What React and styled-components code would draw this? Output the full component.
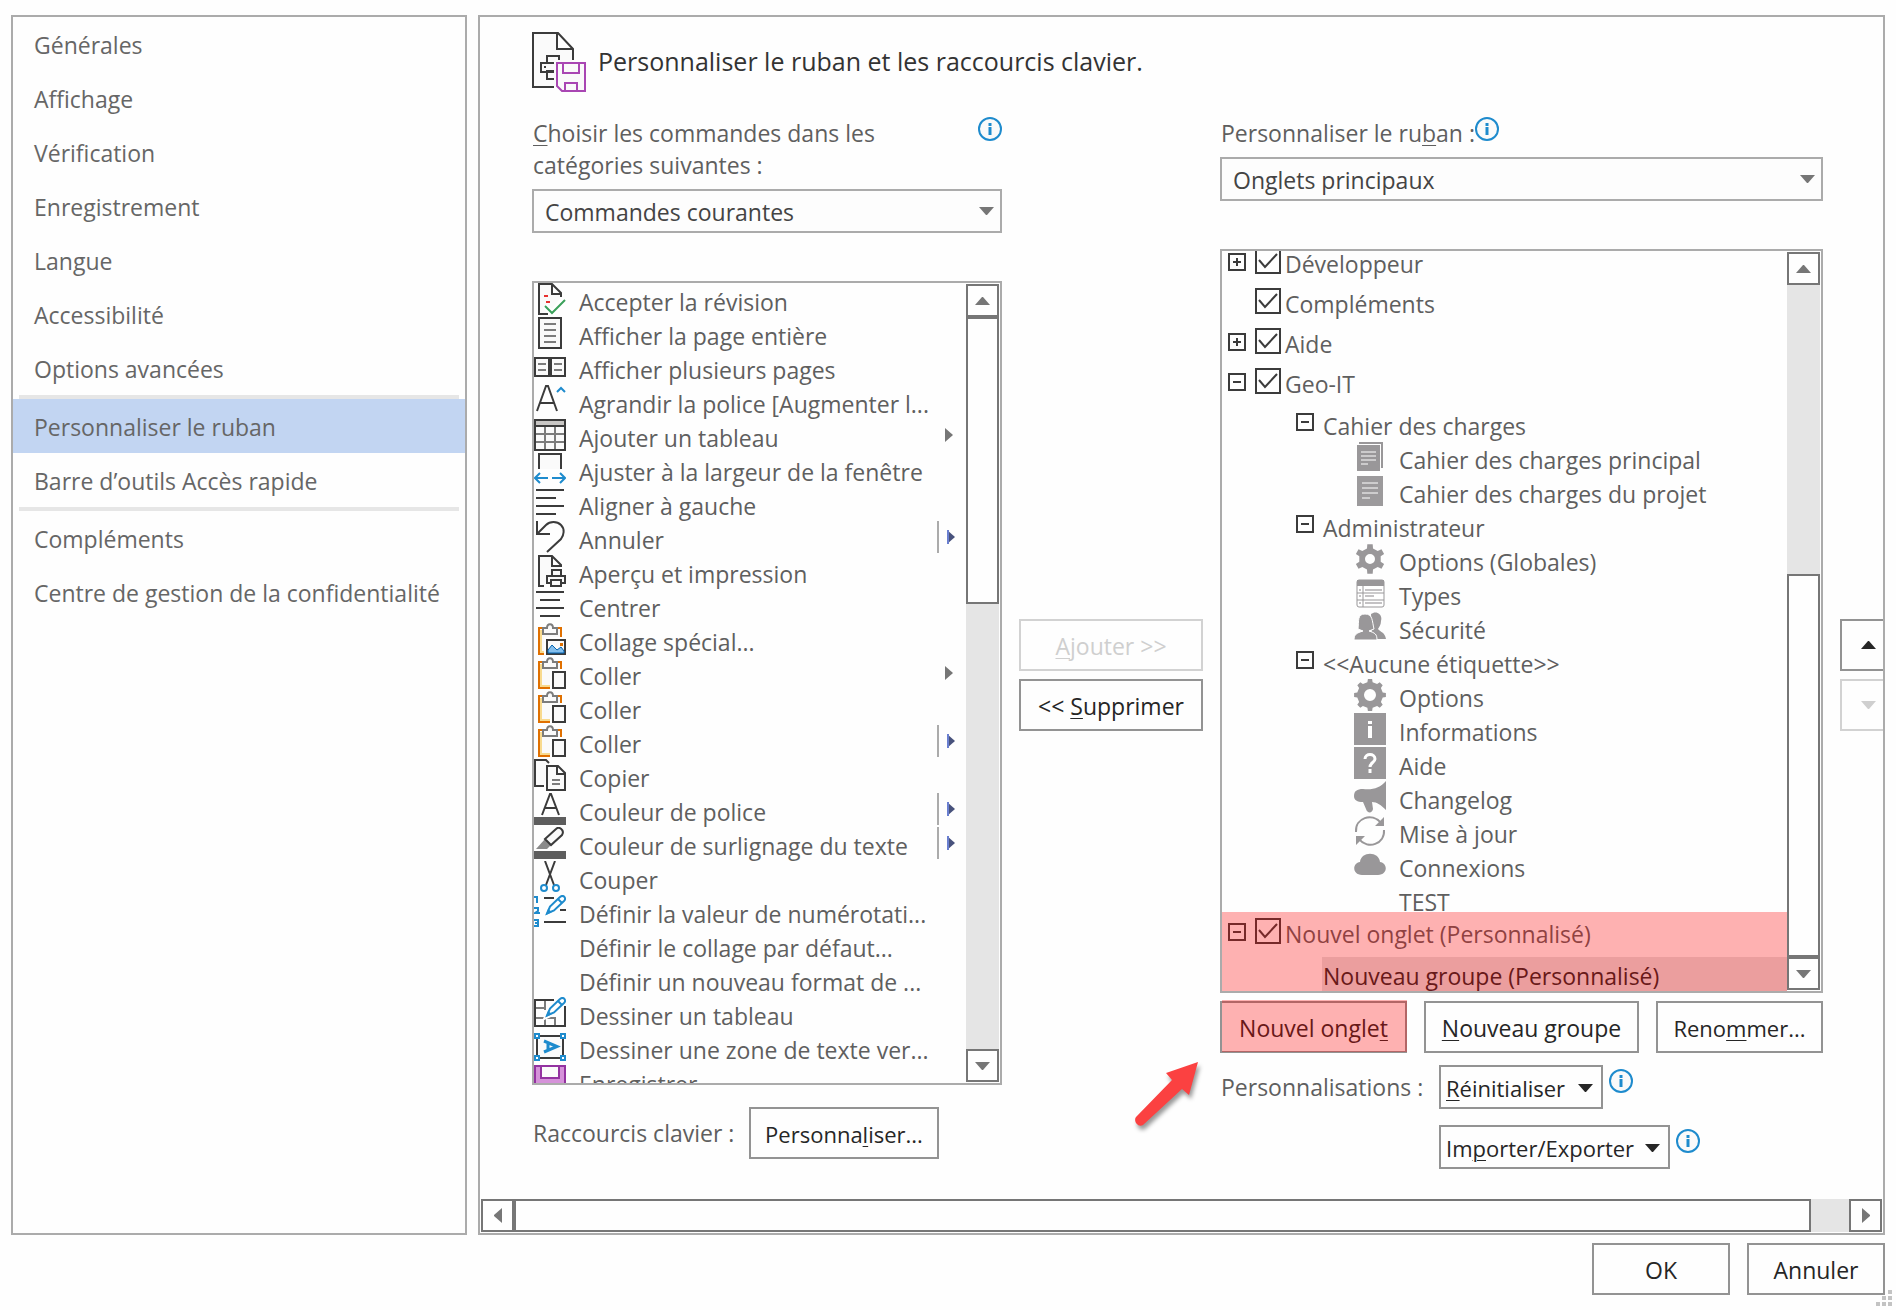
import React, { useState } from "react";
import styled, { createGlobalStyle } from "styled-components";

const INK = "#3b3b3b";
const BLUE = "#1e8bcd";
const GREY = "#999799";
const EDGE = "#767676";

const GlobalStyle = createGlobalStyle`
  *, *::before, *::after { box-sizing: border-box; }
  body {
    margin: 0;
    background: #fefefe;
    color: #5f5f5f;
    font: 23px/32px "Open Sans", "Noto Sans", sans-serif;
  }
  button, select, input { font: inherit; color: inherit; }
  u { text-decoration-thickness: 1px; text-underline-offset: 3px; }
`;

/* ---------- layout ---------- */

const Dialog = styled.div`
  position: relative;
  display: flex;
  flex-direction: column;
  gap: 8px;
  height: 100vh;
  padding: 15px 11px;
`;

const Columns = styled.div`
  display: flex;
  flex: 1;
  gap: 11px;
  min-height: 0;
`;

const Sidebar = styled.nav`
  flex: none;
  width: 456px;
  border: 2px solid #ababab;
`;

const NavLink = styled.a`
  display: block;
  height: 54px;
  padding: 0 0 0 21px;
  line-height: 56px;
  color: #666;
  text-decoration: none;
  white-space: nowrap;
  background: ${(p) => (p.$active ? "#c2d5f2" : "transparent")};
`;

const NavRule = styled.hr`
  height: 4px;
  margin: 0 6px;
  border: 0;
  background: #e6e6e6;
`;

const Panel = styled.main`
  display: flex;
  flex: 1;
  flex-direction: column;
  min-width: 0;
  overflow: hidden;
  border: 2px solid #ababab;
`;

const Header = styled.header`
  display: flex;
  gap: 12px;
  height: 100px;
  padding: 15px 0 0 52px;
`;

const Title = styled.h1`
  margin: 0;
  font-size: 25px;
  font-weight: 400;
  line-height: 58px;
  color: #333;
`;

const Body = styled.div`
  display: grid;
  flex: 1;
  grid-template-columns: minmax(470px, 470fr) 184px minmax(603px, 603fr) 57px;
  gap: 17px;
  min-height: 0;
  padding: 0 0 29px 52px;
`;

const Column = styled.section`
  display: flex;
  flex-direction: column;
  min-height: 0;
  padding-bottom: ${(p) => p.$bottom || 0}px;
`;

const ButtonStack = styled.div`
  display: flex;
  flex-direction: column;
  justify-content: center;
  gap: 8px;
  padding-top: 64px;
`;

const Caption = styled.div`
  display: flex;
  justify-content: ${(p) => (p.$spread ? "space-between" : "flex-start")};
  margin-bottom: 8px;
  padding-left: 1px;
`;

const CaptionLabel = styled.label`
  max-width: 360px;
`;

const Footer = styled.footer`
  display: flex;
  justify-content: flex-end;
  gap: 17px;
`;

/* ---------- controls ---------- */

const SelectBox = styled.div`
  position: relative;
  margin-bottom: 48px;
`;

const Select = styled.select`
  display: block;
  width: 100%;
  height: 44px;
  padding: 2px 40px 0 11px;
  border: 2px solid #ababab;
  border-radius: 0;
  background: #fdfdfd;
  color: #444;
  appearance: none;
`;

const SelectArrow = styled.svg`
  position: absolute;
  top: 18px;
  right: 8px;
  pointer-events: none;
`;

const Button = styled.button`
  position: relative;
  width: ${(p) => p.$width}px;
  height: 52px;
  padding: 2px 0 0;
  border: 2px solid #939393;
  background: #fefefe;
  color: #262626;
  font-size: ${(p) => (p.$compact ? 22 : 23)}px;
  white-space: nowrap;

  > svg { display: block; margin: 0 auto; }

  &:disabled {
    border-color: #d2d2d2;
    color: #cfcfcf;
  }
`;

const ArrowButton = styled(Button)`
  padding: 0;
`;

const MenuButton = styled(Button)`
  display: flex;
  align-items: center;
  justify-content: space-between;
  height: 44px;
  padding: 2px 8px 0 5px;
  font-size: 22px;

  > svg { margin: 0; }
`;

const Highlight = styled.span`
  position: absolute;
  inset: -3px -2px -1px 0;
  background: rgba(255, 0, 0, 0.3);
  pointer-events: none;
`;

const ShortcutRow = styled.div`
  display: flex;
  align-items: center;
  justify-content: space-between;
  width: 407px;
  margin-top: 22px;
  padding-left: 1px;
`;

const Actions = styled.div`
  position: relative;
  display: flex;
  justify-content: space-between;
  margin: 8px 0 12px;
`;

const Arrow = styled.svg`
  position: absolute;
  top: 56px;
  left: -90px;
  overflow: visible;
  filter: drop-shadow(2px 4px 2px rgba(0, 0, 0, 0.4));
`;

const Custom = styled.div`
  display: grid;
  grid-template-columns: 219px 1fr;
  row-gap: 16px;
`;

const CustomLabel = styled.span`
  padding-left: 1px;
  line-height: 44px;
`;

const CustomMenu = styled.div`
  display: flex;
  grid-column: 2;
  gap: 6px;
`;

const InfoSvg = styled.svg`
  flex: none;
  margin-top: ${(p) => p.$top || 0}px;
`;

/* ---------- lists ---------- */

const ListBox = styled.div`
  display: flex;
  flex: 1;
  min-height: 0;
  padding-right: 1px;
  overflow: hidden;
  border: 2px solid #ababab;
`;

const Rows = styled.ul`
  flex: 1;
  margin: ${(p) => p.$shift || 0}px 0 0;
  padding: 0;
  list-style: none;
  white-space: nowrap;
`;

const Row = styled.li`
  display: flex;
  gap: 13px;
  height: 34px;
  padding-left: ${(p) => p.$indent || 0}px;
`;

const RowText = styled.span`
  padding-top: 5px;
  line-height: 28px;
`;

const Icon = styled.svg`
  flex: none;
  width: 32px;
  height: 32px;
`;

const SubMenu = styled.svg`
  flex: none;
  width: 29px;
  height: 32px;
  margin-left: auto;
`;

const TabRow = styled.li`
  display: flex;
  align-items: flex-start;
  height: 40px;
  padding-left: 6px;
`;

const GroupRow = styled(Row)`
  gap: 9px;
  padding-left: 74px;
`;

const Expander = styled.button`
  flex: none;
  width: 18px;
  height: 18px;
  margin-top: 6px;
  padding: 0;
  border: 2px solid ${INK};
  background: none;
  visibility: ${(p) => (p.$hidden ? "hidden" : "visible")};

  svg { display: block; }
`;

const CheckLabel = styled.label`
  display: flex;
  gap: 4px;
  margin-left: 9px;
  line-height: 34px;
`;

const CheckCell = styled.span`
  display: grid;
  height: 26px;
  margin-top: 1px;

  > * { grid-area: 1 / 1; }
  > svg { pointer-events: none; }
`;

const CheckInput = styled.input`
  width: 26px;
  height: 26px;
  margin: 0;
  border: 2px solid ${INK};
  background: #fefefe;
  appearance: none;

  &:not(:checked) + svg { visibility: hidden; }
`;

const NewTab = styled.ul`
  position: relative;
  margin: 0;
  padding: 0;
  list-style: none;

  &::after {
    content: "";
    position: absolute;
    inset: -5px 0 0;
    background: rgba(255, 0, 0, 0.3);
    pointer-events: none;
  }
`;

const SelectedRow = styled(Row)`
  margin-left: 100px;
  padding-left: 1px;
  background: #e3e3e3;
  color: #262626;
`;

/* ---------- scroll bars ---------- */

const VScroll = styled.div`
  display: flex;
  flex: none;
  flex-direction: column;
  width: 33px;
  margin: 1px 0;
  background: #e5e5e5;
`;

const HScroll = styled.div`
  display: flex;
  flex: none;
  height: 33px;
  margin: 1px;
  background: #e5e5e5;
`;

const ScrollButton = styled.button`
  display: grid;
  flex: none;
  place-items: center;
  width: 33px;
  height: 33px;
  padding: 0;
  border: 2px solid ${EDGE};
  background: #fefefe;
`;

const Thumb = styled.div`
  flex: ${(p) => p.$grow};
  border: 2px solid ${EDGE};
  background: #fefefe;
`;

const Gap = styled.div`
  flex: ${(p) => p.$flex};
`;

const Grip = styled.svg`
  position: absolute;
  right: 4px;
  bottom: 4px;
`;

/* ---------- drawings ---------- */

function Info({ top }) {
  return (
    <InfoSvg $top={top} width="24" height="24" viewBox="0 0 24 24" role="img" aria-label="Informations">
      <circle cx="12" cy="12" r="11" fill="#fafafa" stroke={BLUE} strokeWidth="2" />
      <path d="M12 6v3M12 10v8" stroke={BLUE} strokeWidth="3" />
    </InfoSvg>
  );
}

const TRIANGLES = {
  up: ["15", "8", "M0 8 7 0H8L15 8z"],
  down: ["15", "8", "M0 0H15L8 8H7z"],
  left: ["8", "15", "M8 0V15L0 8V7z"],
  right: ["8", "15", "M0 0V15L8 8V7z"],
};

function Triangle({ dir, color = EDGE }) {
  const [w, h, d] = TRIANGLES[dir];
  return (
    <svg width={w} height={h} viewBox={`0 0 ${w} ${h}`} aria-hidden="true">
      <path d={d} fill={color} />
    </svg>
  );
}

function gearPath(teeth, outer, inner, hole) {
  const pts = [];
  const step = (Math.PI * 2) / teeth;
  for (let i = 0; i < teeth; i += 1) {
    const a = i * step - Math.PI / 2;
    [[-0.26, inner], [-0.17, outer], [0.17, outer], [0.26, inner]].forEach(([o, r]) => {
      pts.push(`${(16 + r * Math.cos(a + o * step)).toFixed(1)} ${(16 + r * Math.sin(a + o * step)).toFixed(1)}`);
    });
  }
  return `M${pts.join("L")}z M${16 + hole} 16a${hole} ${hole} 0 1 0 ${-2 * hole} 0a${hole} ${hole} 0 1 0 ${2 * hole} 0z`;
}

const pencil = (
  <g>
    <path d="M12 20 16 11 27 1C30-1 33 2 31 5L21 16z" fill="#fff" stroke="#fff" strokeWidth="4" />
    <path d="M13 18.500 16 11.500 26 2C29-1 33 3 30 6L20 15.500zM24 4 28 8" fill="#fff" stroke={BLUE} strokeWidth="2" />
    <path d="M12 20 14 14 18 17z" fill={BLUE} />
  </g>
);

const clipboard = (
  <g>
    <path d="M5 5H27V31H5z" fill="#fafafa" stroke="#e07000" strokeWidth="2" />
    <path d="M7 7V29H26" fill="none" stroke="#f8da8e" strokeWidth="2" />
    <path d="M9 11V5H13C13 0 19 0 19 5H23V11z" fill="#fafafa" stroke="#7c7c7c" strokeWidth="2" />
  </g>
);

const pageFold = <path d="M14 31H5V1H18L27 10V14M18 1V11H27" fill="#fafafa" stroke={INK} strokeWidth="2" />;

const paste = (
  <>
    {clipboard}
    <path d="M16 12H32V32H16z" fill="#fff" />
    <path d="M19 15H31V31H19z" fill="#fafafa" stroke={INK} strokeWidth="2" />
  </>
);

const ICONS = {
  accept: (
    <>
      {pageFold}
      <path d="M10 13h4M12 19h4" stroke="#e8312f" strokeWidth="2" />
      <path d="M11 23 18 30 31 17" fill="none" stroke="#fff" strokeWidth="6" />
      <path d="M11 23 18 30 31 17" fill="none" stroke="#3ba05a" strokeWidth="2" />
    </>
  ),
  page: (
    <>
      <path d="M5 1H27V31H5z" fill="#fafafa" stroke={INK} strokeWidth="2" />
      <path d="M10 7H22M10 13H22M10 19H22M10 25H22" stroke="#7c7c7c" strokeWidth="2" />
    </>
  ),
  pages: (
    <>
      <path d="M1 7H31V25H1z" fill="#fafafa" stroke={INK} strokeWidth="2" />
      <path d="M16 7V25" stroke={INK} strokeWidth="4" />
      <path d="M4 13H12M4 19H12M20 13H28M20 19H28" stroke="#7c7c7c" strokeWidth="2" />
    </>
  ),
  grow: (
    <>
      <path d="M3 26 12 1H14L23 26M6 18H20" fill="none" stroke={INK} strokeWidth="2" />
      <path d="M23 7 27 3 31 7" fill="none" stroke={BLUE} strokeWidth="2" />
    </>
  ),
  table: (
    <>
      <path d="M1 1H31V31H1z" fill="#fafafa" />
      <path d="M1 1H31V7H1z" fill="#c8c6c4" />
      <path d="M11 8V31M21 8V31M1 15H31M1 23H31" stroke="#7c7c7c" strokeWidth="2" />
      <path d="M1 1H31V31H1zM1 7H31" fill="none" stroke={INK} strokeWidth="2" />
    </>
  ),
  fit: (
    <>
      <path d="M5 16V1H27V16" fill="#fafafa" stroke={INK} strokeWidth="2" />
      <path d="M1 25H14M6 20 1 25 6 30M31 25H18M26 20 31 25 26 30" fill="none" stroke={BLUE} strokeWidth="2" />
    </>
  ),
  left: <path d="M2 3H30M2 11H22M2 19H30M2 27H22" stroke={INK} strokeWidth="2" />,
  center: <path d="M2 3H30M6 11H26M2 19H30M6 27H26" stroke={INK} strokeWidth="2" />,
  undo: <path d="M3 0V13H16M3 13 12 4C16 0 23 0 27 4 31 8 30 14 27 18L13 31" fill="none" stroke={INK} strokeWidth="2" />,
  print: (
    <>
      <path d="M10 31H5V1H18L27 10V12M18 1V11H27" fill="#fafafa" stroke={INK} strokeWidth="2" />
      <path d="M18 21V15H27V21M17 28H13V21H31V28H27M17 25H27V31H17z" fill="#fafafa" stroke={INK} strokeWidth="2" />
    </>
  ),
  pasteSpecial: (
    <>
      {clipboard}
      <path d="M10 14H32V32H10z" fill="#fff" />
      <path d="M13 17H31V31H13z" fill="#fafafa" stroke={INK} strokeWidth="2" />
      <path d="M14 30V27L18 22 23 27 27 24 30 28V30z" fill="#83beec" stroke="#0063b1" strokeWidth="1" />
      <path d="M26 20h3v3h-3z" fill="#e07000" />
    </>
  ),
  paste,
  copy: (
    <>
      <path d="M10 27H1V1H12L15 4" fill="#fafafa" stroke={INK} strokeWidth="2" />
      <path d="M13 7H24L31 14V31H13zM23 7V15H31" fill="#fafafa" stroke={INK} strokeWidth="2" />
      <path d="M18 21H26M18 25H26" stroke="#7c7c7c" strokeWidth="2" />
    </>
  ),
  fontColor: (
    <>
      <path d="M8 22 16 1H17L25 22M11 15H22" fill="none" stroke={INK} strokeWidth="2" />
      <path d="M0 24H32V32H0z" fill="#5d5d5d" />
    </>
  ),
  marker: (
    <>
      <path d="M2 22 11 12 17 18 13 22z" fill="#8a8a8a" />
      <path d="M11 12 22 2C25-1 31 3 28 8L17 18z" fill="#fafafa" stroke={INK} strokeWidth="2" />
      <path d="M0 24H32V32H0z" fill="#5d5d5d" />
    </>
  ),
  cut: (
    <>
      <path d="M11 0 20 24M21 0 12 24" stroke={INK} strokeWidth="2" />
      <path d="M13 27a3 3 0 1 0-6 0a3 3 0 1 0 6 0M25 27a3 3 0 1 0-6 0a3 3 0 1 0 6 0" fill="#fff" stroke={BLUE} strokeWidth="2" />
    </>
  ),
  numbering: (
    <>
      <path d="M10 3H20M26 15H32M10 27H32" stroke={INK} strokeWidth="2" />
      <path d="M0 2H3V8M0 13H4V16L1 18H6M0 25H4V31H0M1 28H4" fill="none" stroke={BLUE} strokeWidth="2" />
      {pencil}
    </>
  ),
  drawTable: (
    <>
      <path d="M11 4V13M1 11H12M1 21H10M11 20V29M21 20V29M11 21H21" fill="none" stroke="#7c7c7c" strokeWidth="2" />
      <path d="M20 3H1V29H31V9" fill="none" stroke={INK} strokeWidth="2" />
      {pencil}
    </>
  ),
  textBox: (
    <>
      <path d="M3 5H29V27H3z" fill="#fafafa" stroke={INK} strokeWidth="2" />
      <path d="M1 3h4v4h-4zM27 3h4v4h-4zM1 25h4v4h-4zM27 25h4v4h-4z" fill="#fff" stroke={BLUE} strokeWidth="2" />
      <path d="M10 10 23 15.500 10 21M14 12V19" fill="none" stroke={BLUE} strokeWidth="3" />
    </>
  ),
  save: (
    <>
      <path d="M1 1H31V31H1z" fill="#d592d9" stroke="#9332a0" strokeWidth="2" />
      <path d="M7 1H25V13H7z" fill="#fafafa" stroke="#9332a0" strokeWidth="2" />
    </>
  ),
  books: (
    <>
      <path d="M5 1H29V27H27V3H5z" fill={GREY} />
      <path d="M3 4H26V30H3z" fill={GREY} />
      <path d="M7 11H22M7 15H22M7 19H22M7 23H14" stroke="#fff" strokeWidth="1" />
    </>
  ),
  book: (
    <>
      <path d="M3 1H29V31H3z" fill="#9c9a9c" />
      <path d="M8 8H24M8 13H24M8 18H24M8 23H16" stroke="#fff" strokeWidth="1" />
    </>
  ),
  gear: <path d={gearPath(6, 15, 11, 5)} fill={GREY} fillRule="evenodd" />,
  gearWide: <path d={gearPath(8, 16, 13, 6)} fill={GREY} fillRule="evenodd" />,
  types: (
    <>
      <rect x="3" y="3" width="27" height="27" rx="2" fill="#fff" stroke={GREY} strokeWidth="1" />
      <path d="M3 3H30V9H3z" fill={GREY} />
      <path d="M3 16H30M3 23H30M9 9V30" stroke={GREY} strokeWidth="1" />
      <path d="M11 13H28M11 19H20M11 26H28M5 13h2M5 19h2M5 26h2" stroke="#c4c2c4" strokeWidth="2" />
    </>
  ),
  people: (
    <>
      <path d="M17 3C22-1 29 3 27 10 27 14 25 16 24 18 26 21 31 21 32 28H18z" fill={GREY} />
      <path d="M0 29C0 23 3 22 9 20L4 18C5 10 3 3 11 3 19 3 18 10 20 18L15 20C21 22 23 23 23 29z" fill={GREY} stroke="#fff" strokeWidth="1" />
    </>
  ),
  info: (
    <>
      <path d="M0 0H32V32H0z" fill={GREY} />
      <path d="M14 8h4v3h-4zM14 13h4v12h-4z" fill="#fff" />
    </>
  ),
  help: (
    <>
      <path d="M0 0H32V32H0z" fill={GREY} />
      <path d="M11 12C11 6 21 6 21 12 21 15 16 16 16 20M16 22V26" fill="none" stroke="#fff" strokeWidth="3" />
    </>
  ),
  megaphone: <path d="M32 0V29C27 24 23 21 18 21L19 28C18 33 13 32 12 28L9 21C3 21 0 19 0 15 0 10 3 8 9 8 19 9 26 7 32 0z" fill={GREY} />,
  refresh: (
    <>
      <path d="M2 17C1 3 18-3 27 8M30 15C31 29 14 35 5 24" fill="none" stroke={GREY} strokeWidth="2" />
      <path d="M30 2V11H21zM2 30V21H11z" fill={GREY} />
    </>
  ),
  cloud: <path d="M8 26C-2 26-2 14 6 13 7 2 25 2 26 13 34 14 34 26 24 26z" fill={GREY} />,
};

function RowIcon({ name }) {
  return (
    <Icon viewBox="0 0 32 32" aria-hidden="true">
      {name ? ICONS[name] : null}
    </Icon>
  );
}

function RibbonIcon() {
  return (
    <svg width="54" height="60" viewBox="0 0 54 60" aria-hidden="true">
      <path d="M22 55H1V1H26L41 17V28M25 1V17H41" fill="#fafafa" stroke={INK} strokeWidth="2" />
      <path d="M15 31V24H27V28M22 31H9V40H22M22 39H15V47H22" fill="none" stroke={INK} strokeWidth="2" />
      <path d="M12 34h2v2h-2z" fill={INK} />
      <path d="M25 31H53V59H30L25 54z" fill="#fafafa" stroke="#a946b3" strokeWidth="2" />
      <path d="M31 31V41H47V31M33 59V51H45V59" fill="none" stroke="#a946b3" strokeWidth="2" />
    </svg>
  );
}

/* ---------- data ---------- */

const NAV = [
  ["Générales", "Affichage", "Vérification", "Enregistrement", "Langue", "Accessibilité", "Options avancées"],
  ["Personnaliser le ruban", "Barre d’outils Accès rapide"],
  ["Compléments", "Centre de gestion de la confidentialité"],
];

const COMMANDS = [
  ["accept", "Accepter la révision"],
  ["page", "Afficher la page entière"],
  ["pages", "Afficher plusieurs pages"],
  ["grow", "Agrandir la police [Augmenter l..."],
  ["table", "Ajouter un tableau", "menu"],
  ["fit", "Ajuster à la largeur de la fenêtre"],
  ["left", "Aligner à gauche"],
  ["undo", "Annuler", "split"],
  ["print", "Aperçu et impression"],
  ["center", "Centrer"],
  ["pasteSpecial", "Collage spécial..."],
  ["paste", "Coller", "menu"],
  ["paste", "Coller"],
  ["paste", "Coller", "split"],
  ["copy", "Copier"],
  ["fontColor", "Couleur de police", "split"],
  ["marker", "Couleur de surlignage du texte", "split"],
  ["cut", "Couper"],
  ["numbering", "Définir la valeur de numérotati..."],
  [null, "Définir le collage par défaut..."],
  [null, "Définir un nouveau format de ..."],
  ["drawTable", "Dessiner un tableau"],
  ["textBox", "Dessiner une zone de texte ver..."],
  ["save", "Enregistrer"],
];

const GROUPS = [
  ["Cahier des charges", [["books", "Cahier des charges principal"], ["book", "Cahier des charges du projet"]]],
  ["Administrateur", [["gear", "Options (Globales)"], ["types", "Types"], ["people", "Sécurité"]]],
  [
    "<<Aucune étiquette>>",
    [
      ["gearWide", "Options"],
      ["info", "Informations"],
      ["help", "Aide"],
      ["megaphone", "Changelog"],
      ["refresh", "Mise à jour"],
      ["cloud", "Connexions"],
      [null, "TEST"],
    ],
  ],
];

/* ---------- parts ---------- */

function SubMenuMark({ kind }) {
  if (!kind) return null;
  return (
    <SubMenu viewBox="0 0 29 32" aria-hidden="true">
      {kind === "menu" ? (
        <path d="M8 9V23L16 16z" fill="#767676" />
      ) : (
        <>
          <path d="M1 0V32" stroke="#ababab" strokeWidth="2" />
          <path d="M10 9V23L18 16z" fill="#48527c" />
          <path d="M10 9H12V23H10z" fill="#6a7fd0" />
        </>
      )}
    </SubMenu>
  );
}

function Toggle({ open, hidden }) {
  return (
    <Expander type="button" $hidden={hidden} aria-label={open ? "Réduire" : "Développer"}>
      <svg width="14" height="14" viewBox="0 0 14 14">
        <path d={open ? "M3 7H11" : "M3 7H11M7 3V11"} stroke={INK} strokeWidth="2" />
      </svg>
    </Expander>
  );
}

function Tab({ name, open, leaf }) {
  const [checked, setChecked] = useState(true);
  return (
    <TabRow>
      <Toggle open={open} hidden={leaf} />
      <CheckLabel>
        <CheckCell>
          <CheckInput type="checkbox" checked={checked} onChange={() => setChecked(!checked)} />
          <svg width="26" height="26" viewBox="0 0 26 26" aria-hidden="true">
            <path d="M4 12 10 19 22 6" fill="none" stroke={INK} strokeWidth="2" />
          </svg>
        </CheckCell>
        {name}
      </CheckLabel>
    </TabRow>
  );
}

function DropDown({ id, value }) {
  return (
    <SelectBox>
      <Select id={id} defaultValue={value}>
        <option>{value}</option>
      </Select>
      <SelectArrow width="15" height="8" viewBox="0 0 15 8" aria-hidden="true">
        <path d="M0 0H15L8 8H7z" fill={EDGE} />
      </SelectArrow>
    </SelectBox>
  );
}

function VerticalBar({ before, thumb, after }) {
  return (
    <VScroll>
      <ScrollButton type="button" aria-label="Défiler vers le haut"><Triangle dir="up" /></ScrollButton>
      <Gap $flex={before} />
      <Thumb $grow={thumb} />
      <Gap $flex={after} />
      <ScrollButton type="button" aria-label="Défiler vers le bas"><Triangle dir="down" /></ScrollButton>
    </VScroll>
  );
}

export default function App() {
  return (
    <>
      <GlobalStyle />
      <Dialog>
        <Columns>
          <Sidebar>
            {NAV.map((section, i) => (
              <React.Fragment key={section[0]}>
                {i > 0 && <NavRule />}
                {section.map((name) => (
                  <NavLink key={name} href="#" $active={name === "Personnaliser le ruban"}>{name}</NavLink>
                ))}
              </React.Fragment>
            ))}
          </Sidebar>

          <Panel>
            <Header>
              <RibbonIcon />
              <Title>Personnaliser le ruban et les raccourcis clavier.</Title>
            </Header>

            <Body>
              <Column $bottom={10}>
                <Caption $spread>
                  <CaptionLabel htmlFor="commands"><u>C</u>hoisir les commandes dans les catégories suivantes :</CaptionLabel>
                  <Info />
                </Caption>
                <DropDown id="commands" value="Commandes courantes" />
                <ListBox>
                  <Rows>
                    {COMMANDS.map(([icon, name, kind], i) => (
                      <Row key={i}>
                        <RowIcon name={icon} />
                        <RowText>{name}</RowText>
                        <SubMenuMark kind={kind} />
                      </Row>
                    ))}
                  </Rows>
                  <VerticalBar before="0 0 0" thumb={284} after="446 1 0" />
                </ListBox>
                <ShortcutRow>
                  <span>Raccourcis clavier :</span>
                  <Button type="button" $width={190} $compact>Personna<u>l</u>iser...</Button>
                </ShortcutRow>
              </Column>

              <ButtonStack>
                <Button type="button" $width={184} disabled><u>A</u>jouter &gt;&gt;</Button>
                <Button type="button" $width={184}>&lt;&lt; <u>S</u>upprimer</Button>
              </ButtonStack>

              <Column>
                <Caption>
                  <CaptionLabel htmlFor="ribbon">Personnaliser le ru<u>b</u>an :</CaptionLabel>
                  <Info />
                </Caption>
                <DropDown id="ribbon" value="Onglets principaux" />
                <ListBox>
                  <Rows $shift={-4}>
                    <Tab name="Développeur" />
                    <Tab name="Compléments" leaf />
                    <Tab name="Aide" />
                    <Tab name="Geo-IT" open />
                    {GROUPS.map(([group, items]) => (
                      <React.Fragment key={group}>
                        <GroupRow>
                          <Toggle open />
                          <RowText>{group}</RowText>
                        </GroupRow>
                        {items.map(([icon, name]) => (
                          <Row key={name} $indent={132}>
                            <RowIcon name={icon} />
                            <RowText>{name}</RowText>
                          </Row>
                        ))}
                      </React.Fragment>
                    ))}
                    <li>
                      <NewTab>
                        <Tab name="Nouvel onglet (Personnalisé)" open />
                        <SelectedRow><RowText>Nouveau groupe (Personnalisé)</RowText></SelectedRow>
                      </NewTab>
                    </li>
                  </Rows>
                  <VerticalBar before="289 1 0" thumb={379} after="0 0 0" />
                </ListBox>
                <Actions>
                  <Button type="button" $width={187}>Nouvel ongle<u>t</u><Highlight /></Button>
                  <Button type="button" $width={215}><u>N</u>ouveau groupe</Button>
                  <Button type="button" $width={167} $compact>Reno<u>m</u>mer...</Button>
                  <Arrow width="70" height="72" viewBox="0 0 70 72" aria-hidden="true">
                    <path d="M68 5 36 16 42 23 6 60C3 64 8 71 13 68L52 32 59 38z" fill="#fb4141" />
                  </Arrow>
                </Actions>
                <Custom>
                  <CustomLabel>Personnalisations :</CustomLabel>
                  <CustomMenu>
                    <MenuButton type="button" $width={164}><span><u>R</u>éinitialiser</span><Triangle dir="down" color="#262626" /></MenuButton>
                    <Info top={4} />
                  </CustomMenu>
                  <CustomMenu>
                    <MenuButton type="button" $width={231}><span>Im<u>p</u>orter/Exporter</span><Triangle dir="down" color="#262626" /></MenuButton>
                    <Info top={4} />
                  </CustomMenu>
                </Custom>
              </Column>

              <ButtonStack>
                <ArrowButton type="button" $width={57} aria-label="Monter"><Triangle dir="up" color="#262626" /></ArrowButton>
                <ArrowButton type="button" $width={57} aria-label="Descendre" disabled><Triangle dir="down" color="#cfcfcf" /></ArrowButton>
              </ButtonStack>
            </Body>

            <HScroll>
              <ScrollButton type="button" aria-label="Défiler vers la gauche"><Triangle dir="left" /></ScrollButton>
              <Thumb $grow={1297} />
              <Gap $flex="38 1 0" />
              <ScrollButton type="button" aria-label="Défiler vers la droite"><Triangle dir="right" /></ScrollButton>
            </HScroll>
          </Panel>
        </Columns>

        <Footer>
          <Button type="button" $width={138}>OK</Button>
          <Button type="button" $width={138}>Annuler</Button>
        </Footer>
        <Grip width="16" height="16" viewBox="0 0 16 16" aria-hidden="true">
          <path d="M12 0h4v4h-4zM6 6h4v4h-4zM12 6h4v4h-4zM0 12h4v4h-4zM6 12h4v4h-4zM12 12h4v4h-4z" fill="#c3c3c3" />
        </Grip>
      </Dialog>
    </>
  );
}
